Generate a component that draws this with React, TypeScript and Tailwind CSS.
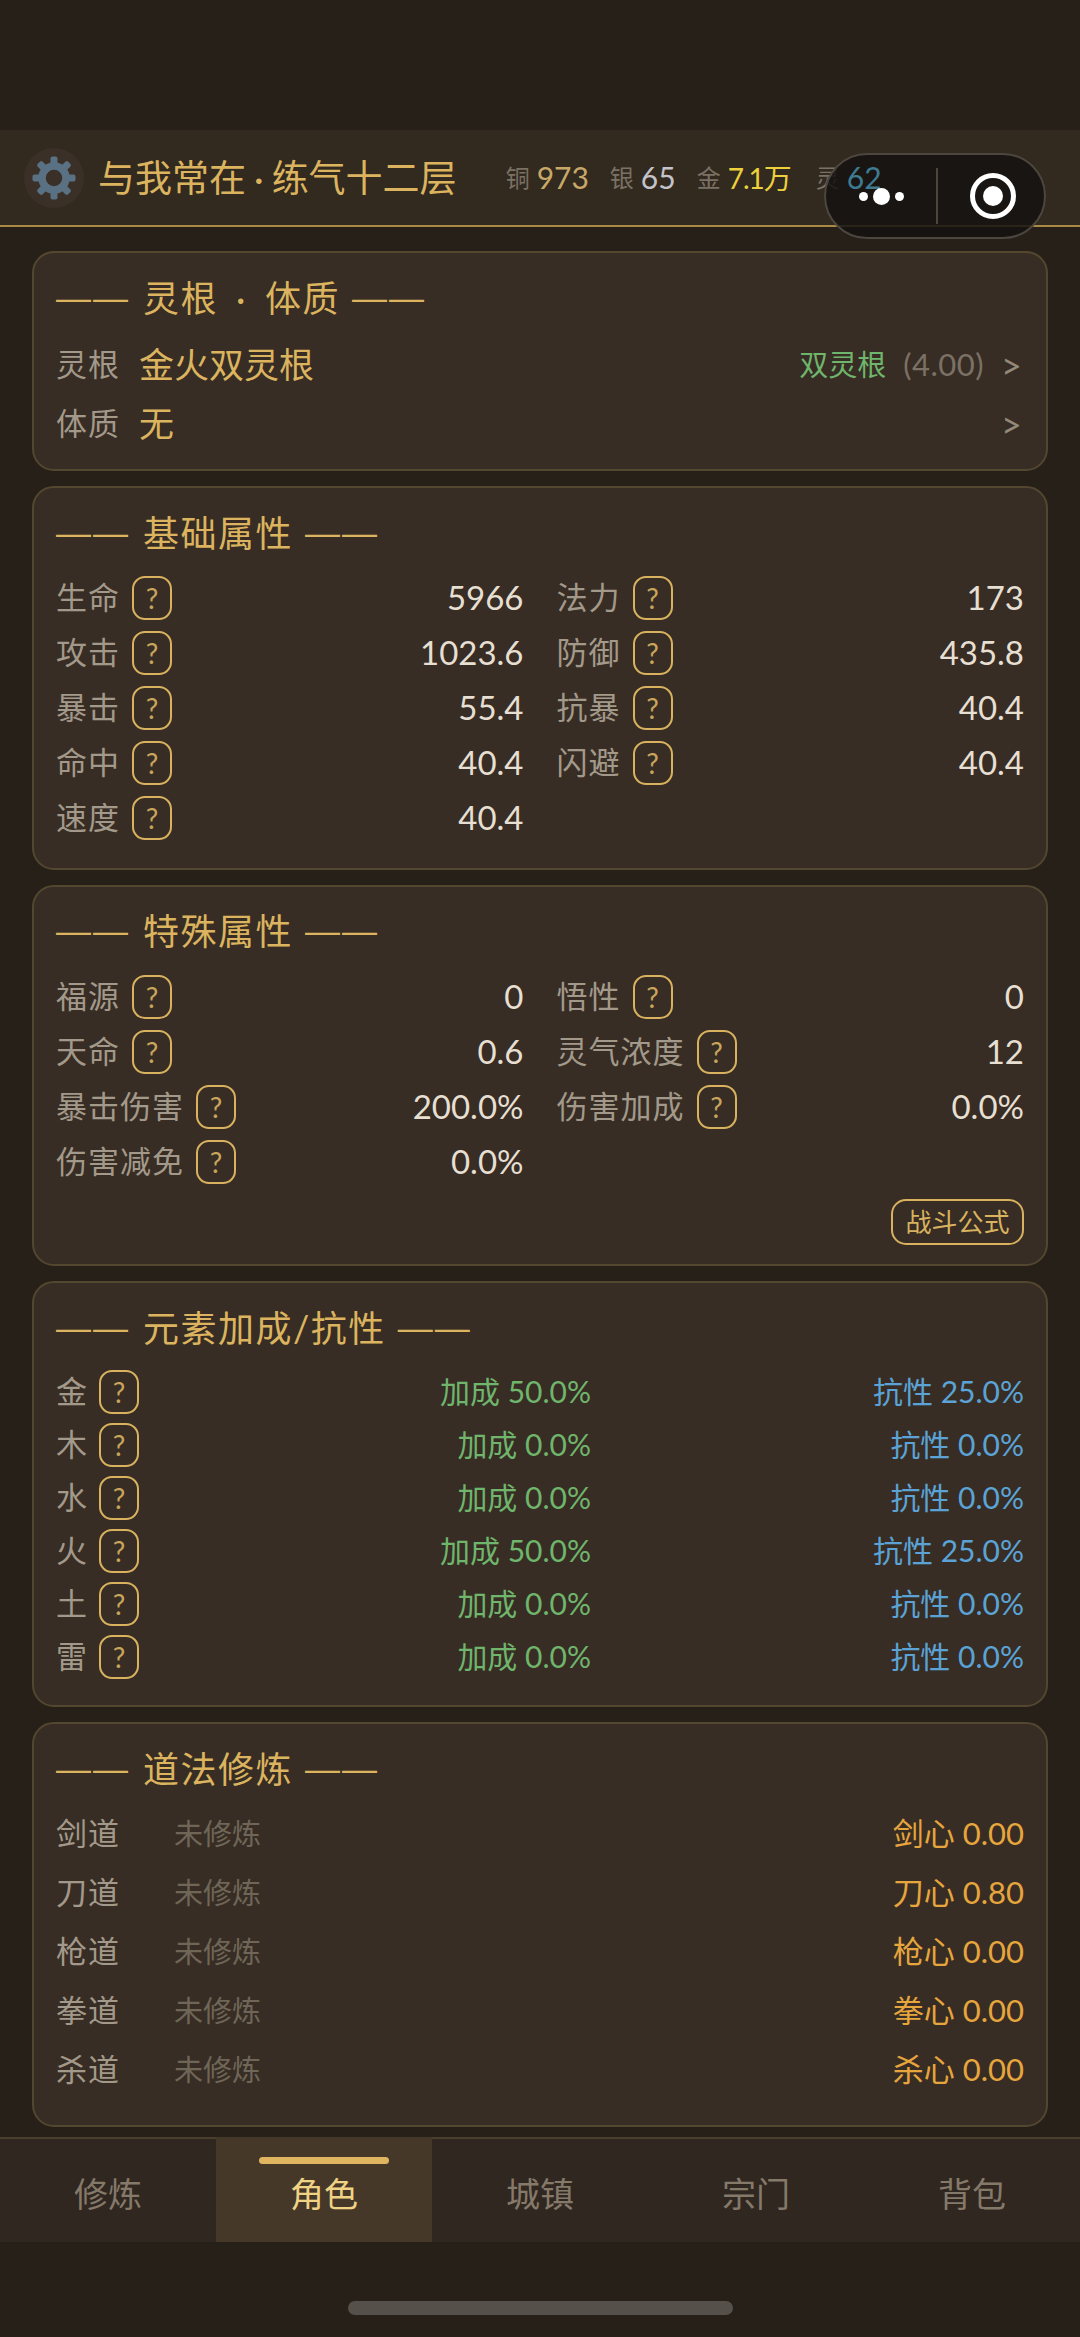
import React from "react";

const basic = [
  ["生命", "5966", "法力", "173"],
  ["攻击", "1023.6", "防御", "435.8"],
  ["暴击", "55.4", "抗暴", "40.4"],
  ["命中", "40.4", "闪避", "40.4"],
  ["速度", "40.4"],
];

const special = [
  ["福源", "0", "悟性", "0"],
  ["天命", "0.6", "灵气浓度", "12"],
  ["暴击伤害", "200.0%", "伤害加成", "0.0%"],
  ["伤害减免", "0.0%"],
];

const elements = [
  ["金", "50.0%", "25.0%"],
  ["木", "0.0%", "0.0%"],
  ["水", "0.0%", "0.0%"],
  ["火", "50.0%", "25.0%"],
  ["土", "0.0%", "0.0%"],
  ["雷", "0.0%", "0.0%"],
];

const daos = [
  ["剑道", "剑心 0.00"],
  ["刀道", "刀心 0.80"],
  ["枪道", "枪心 0.00"],
  ["拳道", "拳心 0.00"],
  ["杀道", "杀心 0.00"],
];

const tabs = ["修炼", "角色", "城镇", "宗门", "背包"];

function Gear() {
  return (
    <svg viewBox="0 0 44 44" className="w-[44px] h-[44px]">
      <circle cx="22" cy="22" r="12" fill="none" stroke="#5a7184" strokeWidth="7.5" />
      {[0, 45, 90, 135, 180, 225, 270, 315].map((a) => (
        <rect key={a} x="18.5" y="0.5" width="7" height="8" rx="2" fill="#5a7184" transform={`rotate(${a} 22 22)`} />
      ))}
    </svg>
  );
}

function Help() {
  return (
    <span className="ml-[12px] w-[40px] h-[44px] shrink-0 border-2 border-[#d9b25f] rounded-[13px] flex items-center justify-center text-[#c9a55c] text-[28px] leading-none">
      ?
    </span>
  );
}

function Title({ children }: { children: React.ReactNode }) {
  return (
    <div className="h-[40px] flex items-center text-[#dcb45f] text-[36px] tracking-[1.5px] leading-[40px] whitespace-pre">
      <span className="mr-[13px] text-[35px] tracking-[2px] font-['Liberation_Sans',sans-serif]">——</span>
      {children}
      <span className="ml-[12px] text-[35px] tracking-[2px] font-['Liberation_Sans',sans-serif]">——</span>
    </div>
  );
}

function Card({ h, pt, children }: { h: number; pt: number; children: React.ReactNode }) {
  return (
    <section
      className="shrink-0 bg-[#372d24] border-2 border-[#54472f] rounded-[22px] px-[22px]"
      style={{ height: h, paddingTop: pt }}
    >
      {children}
    </section>
  );
}

function Attr({ label, value }: { label: string; value: string }) {
  return (
    <div className="h-[55px] flex items-center">
      <span className="text-[#a3998a] text-[31px] tracking-[1px]">{label}</span>
      <Help />
      <span className="ml-auto text-[#e6dfd2] text-[33px]">{value}</span>
    </div>
  );
}

function AttrGrid({ rows, mt }: { rows: string[][]; mt: number }) {
  return (
    <div className="grid grid-cols-2 gap-x-[33px]" style={{ marginTop: mt }}>
      {rows.map((r) => (
        <React.Fragment key={r[0]}>
          <Attr label={r[0]} value={r[1]} />
          {r[2] ? <Attr label={r[2]} value={r[3]} /> : <div />}
        </React.Fragment>
      ))}
    </div>
  );
}

export default function App() {
  return (
    <div className="relative w-[1080px] h-[2337px] overflow-hidden bg-[#262019] flex flex-col font-['Lato','Noto_Sans_CJK_SC',sans-serif]">
      <div className="h-[130px] shrink-0" />

      <header className="h-[97px] shrink-0 bg-[#32291f] border-b-2 border-[#a98a45] flex items-center pl-[24px]">
        <div className="w-[60px] h-[60px] rounded-full bg-[#3a3028] flex items-center justify-center">
          <Gear />
        </div>
        <div className="ml-[14px] text-[#dcb45f] text-[37px] whitespace-nowrap">
          与我常在<span className="mx-[8px]">·</span>练气十二层
        </div>
        <div className="ml-[49px] flex items-center whitespace-nowrap text-[24px] text-[#7b7164]">
          <span>铜</span>
          <span className="ml-[7px] text-[30px] text-[#c7a869]">973</span>
          <span className="ml-[21px]">银</span>
          <span className="ml-[7px] text-[30px] text-[#c3c3c9]">65</span>
          <span className="ml-[21px]">金</span>
          <span className="ml-[7px] text-[28px] tracking-[-1px] text-[#ecd03c]">7.1万</span>
          <span className="ml-[25px]">灵</span>
          <span className="relative z-10 ml-[7px] text-[30px] text-[#3e7b91]">62</span>
        </div>
      </header>

      <div className="absolute left-[824px] top-[153px] w-[222px] h-[86px] rounded-full bg-[#151210]/85 border-2 border-[#4d463e] flex items-center">
        <div className="relative z-20 w-[110px] flex items-center justify-center gap-[5px]">
          <span className="w-[9px] h-[9px] rounded-full bg-white" />
          <span className="w-[17px] h-[17px] rounded-full bg-white" />
          <span className="w-[9px] h-[9px] rounded-full bg-white" />
        </div>
        <span className="w-[2px] h-[56px] bg-[#4d463e]" />
        <div className="flex-1 flex items-center justify-center pl-[3px]">
          <span className="w-[46px] h-[46px] rounded-full border-[5px] border-white flex items-center justify-center">
            <span className="w-[20px] h-[20px] rounded-full bg-white" />
          </span>
        </div>
      </div>

      <main className="mt-[24px] mx-[32px] flex flex-col gap-[15px] h-[1876px]">
        <Card h={220} pt={25}>
          <Title>
            灵根<span className="mx-[18px]">·</span>体质
          </Title>
          <div className="mt-[17px] h-[59px] flex items-center">
            <span className="text-[#a3998a] text-[31px] tracking-[1px]">灵根</span>
            <span className="ml-[19px] text-[#dcb45f] text-[35px]">金火双灵根</span>
            <span className="ml-auto text-[#6fb56c] text-[29px]">双灵根</span>
            <span className="ml-[17px] text-[#7b7164] text-[31px] tracking-[0.5px]">(4.00)</span>
            <span className="ml-[17px] mr-[2px] text-[#94897a] text-[36px] leading-none">&gt;</span>
          </div>
          <div className="h-[59px] flex items-center">
            <span className="text-[#a3998a] text-[31px] tracking-[1px]">体质</span>
            <span className="ml-[19px] text-[#dcb45f] text-[35px]">无</span>
            <span className="ml-auto mr-[2px] text-[#94897a] text-[36px] leading-none">&gt;</span>
          </div>
        </Card>

        <Card h={384} pt={25}>
          <Title>基础属性</Title>
          <AttrGrid rows={basic} mt={17} />
        </Card>

        <Card h={381} pt={24}>
          <Title>特殊属性</Title>
          <AttrGrid rows={special} mt={18} />
          <div className="mt-[10px] flex justify-end">
            <span className="h-[46px] w-[133px] border-2 border-[#d9b25f] rounded-[15px] flex items-center justify-center text-[#d9b25f] text-[26px]">
              战斗公式
            </span>
          </div>
        </Card>

        <Card h={426} pt={25}>
          <Title>元素加成/抗性</Title>
          <div className="mt-[17px] flex flex-col">
            {elements.map((e) => (
              <div key={e[0]} className="h-[53px] flex items-center">
                <div className="w-[535px] flex items-center">
                  <span className="text-[#a3998a] text-[31px]">{e[0]}</span>
                  <Help />
                  <span className="ml-auto text-[#6fb56c] text-[30px]">加成 {e[1]}</span>
                </div>
                <span className="ml-auto text-[#5ba3d6] text-[30px]">抗性 {e[2]}</span>
              </div>
            ))}
          </div>
        </Card>

        <Card h={405} pt={25}>
          <Title>道法修炼</Title>
          <div className="mt-[15px] flex flex-col">
            {daos.map((d) => (
              <div key={d[0]} className="h-[59px] flex items-center">
                <span className="text-[#a3998a] text-[31px] tracking-[1px]">{d[0]}</span>
                <span className="ml-[54px] text-[#6f6658] text-[29px]">未修炼</span>
                <span className="ml-auto text-[#e6a53d] text-[31px]">{d[1]}</span>
              </div>
            ))}
          </div>
        </Card>
      </main>

      <nav className="mt-[10px] h-[105px] shrink-0 bg-[#302720] border-t-2 border-[#4a3e2c] grid grid-cols-5">
        {tabs.map((t) =>
          t === "角色" ? (
            <div key={t} className="relative -mt-[2px] pt-[8px] bg-[#453829] flex items-center justify-center text-[#f0d285] text-[34px]">
              <span className="absolute left-[43px] top-[20px] w-[130px] h-[7px] rounded-full bg-[#dfb65f]" />
              {t}
            </div>
          ) : (
            <div key={t} className="pt-[6px] flex items-center justify-center text-[#85796a] text-[34px]">
              {t}
            </div>
          )
        )}
      </nav>

      <div className="mt-[59px] mx-auto w-[385px] h-[14px] rounded-full bg-[#55504a] shrink-0" />
    </div>
  );
}
